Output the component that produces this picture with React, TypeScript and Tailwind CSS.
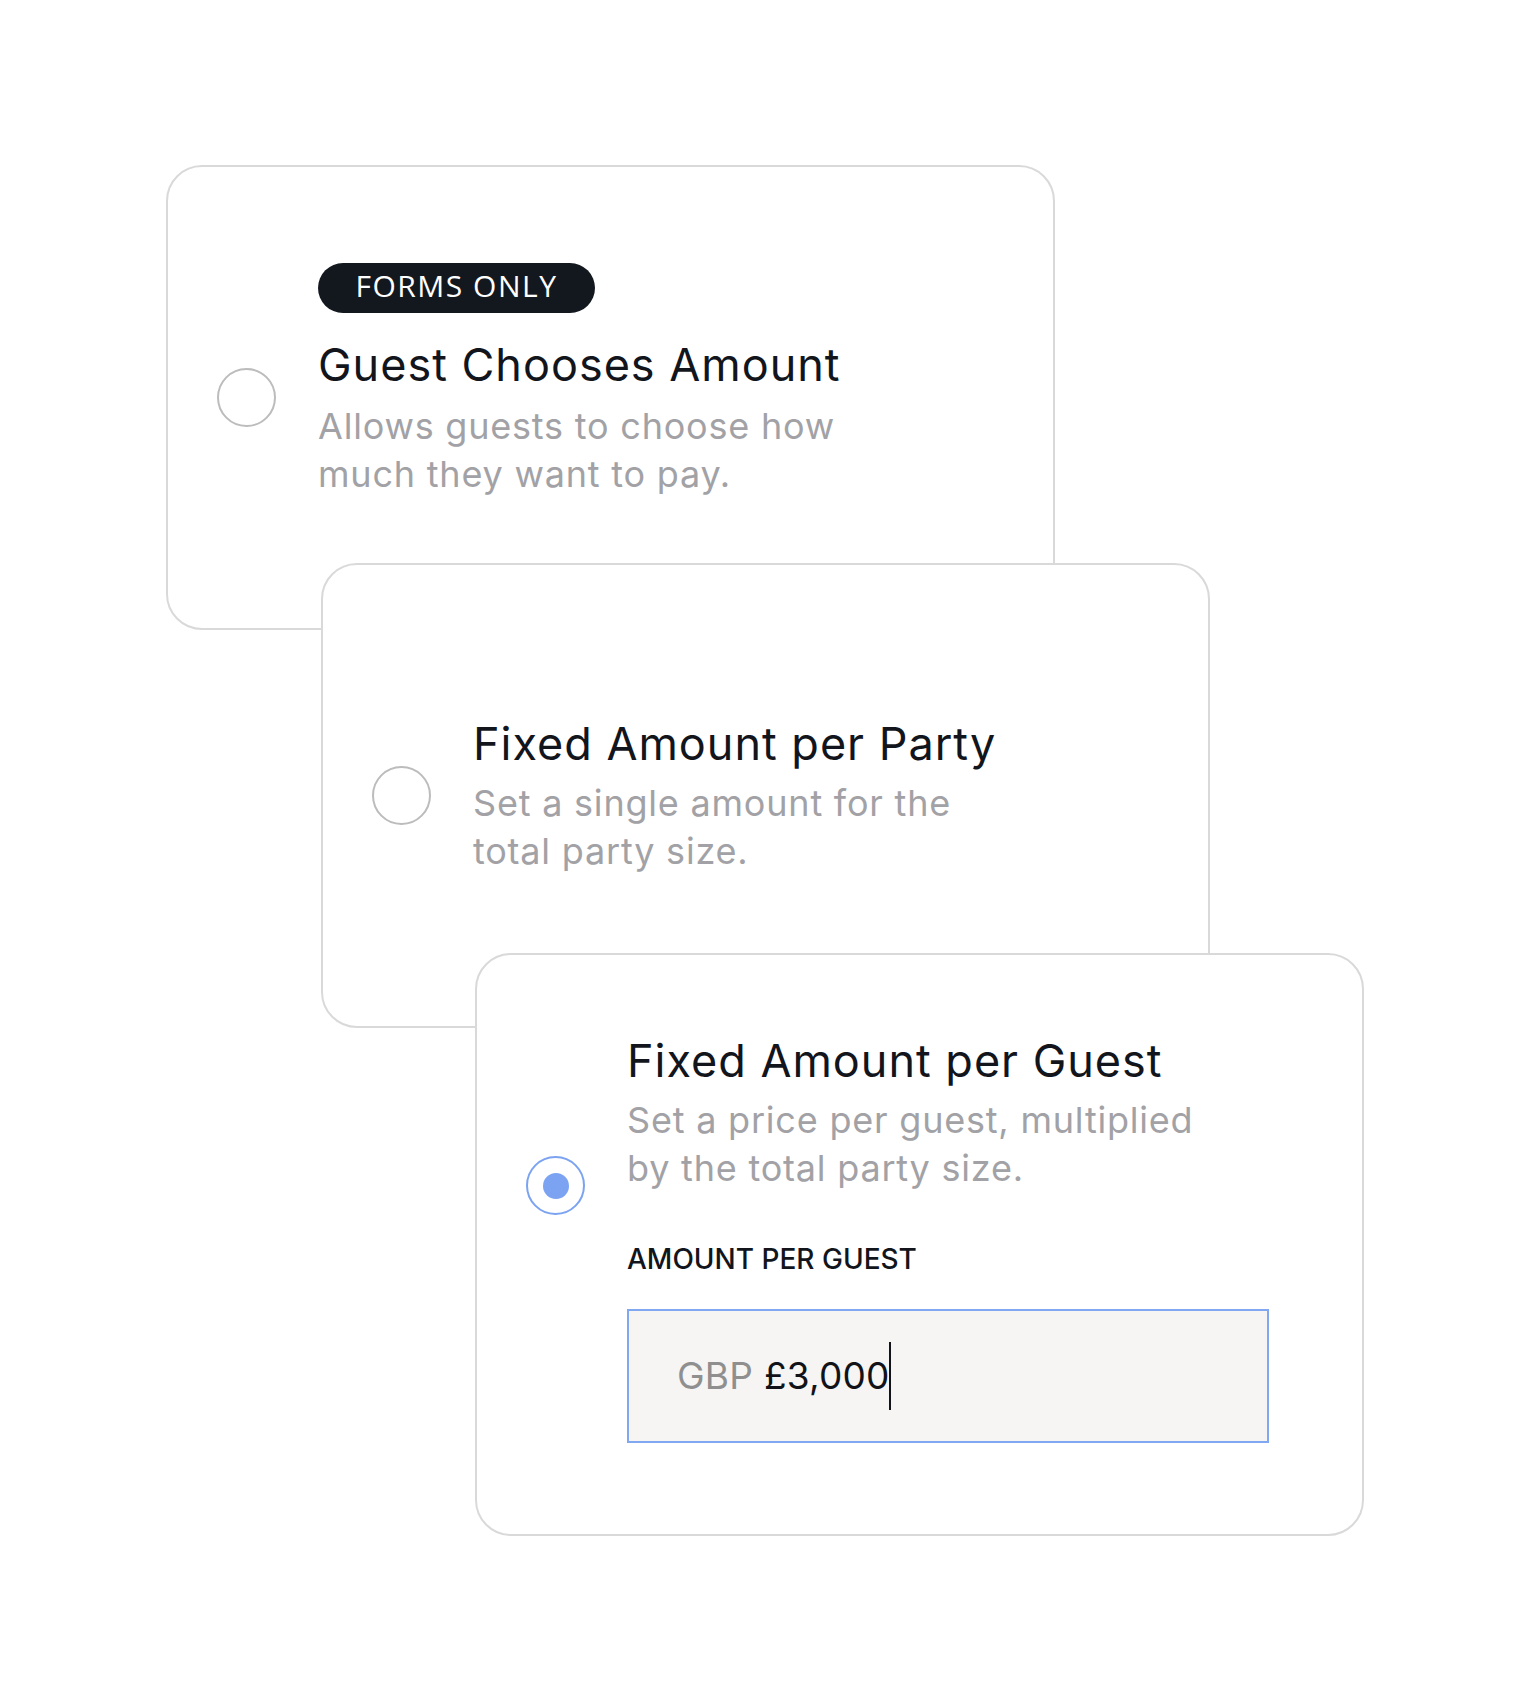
import React from 'react';

interface OptionCardProps {
  title: string;
  lines: string[];
  badge?: string;
  className?: string;
}

const Radio: React.FC<{ selected?: boolean; className?: string }> = ({ selected, className = '' }) => (
  <div
    className={`w-[59px] h-[59px] shrink-0 rounded-full border-[2.5px] flex items-center justify-center ${
      selected ? 'border-[#7ba3f1]' : 'border-[#bcbcbc]'
    } ${className}`}
  >
    {selected && <div className="w-[26px] h-[26px] rounded-full bg-[#7ba3f1]" />}
  </div>
);

const OptionText: React.FC<{ title: string; lines: string[]; tight?: boolean }> = ({ title, lines, tight }) => (
  <>
    <h3 className="text-[45px] leading-[56px] tracking-[0.022em] text-[#12151b] font-normal">{title}</h3>
    <p className={`${tight ? 'mt-[7px]' : 'mt-[9px]'} text-[36px] leading-[48px] tracking-[0.022em] text-[#a2a2a6]`}>
      {lines.map((line, i) => (
        <React.Fragment key={i}>
          {line}
          {i < lines.length - 1 && <br />}
        </React.Fragment>
      ))}
    </p>
  </>
);

const OptionCard: React.FC<OptionCardProps> = ({ title, lines, badge, className = '' }) => (
  <div
    className={`relative w-[889px] h-[465px] bg-white border-2 border-[#d9d9d9] rounded-[36px] flex items-center pl-[49px] ${className}`}
  >
    <Radio />
    <div className={`ml-[42px] ${badge ? 'pb-[35px]' : ''}`}>
      {badge && (
        <span className="inline-flex w-[277px] h-[50px] pb-[3px] items-center justify-center rounded-full bg-[#13181f] text-white text-[30px] leading-none tracking-[0.05em] font-['Open_Sans',sans-serif] mb-[24px]">
          {badge}
        </span>
      )}
      <OptionText title={title} lines={lines} tight={!badge} />
    </div>
  </div>
);

export default function App() {
  return (
    <div className="min-h-[1700px] bg-white pt-[165px] font-['Inter',sans-serif]">
      <div className="flex flex-col items-start">
        <OptionCard
          className="ml-[166px]"
          badge="FORMS ONLY"
          title="Guest Chooses Amount"
          lines={['Allows guests to choose how', 'much they want to pay.']}
        />
        <OptionCard
          className="ml-[321px] -mt-[67px]"
          title="Fixed Amount per Party"
          lines={['Set a single amount for the', 'total party size.']}
        />

        {/* selected option, with the amount field open */}
        <div className="relative ml-[475px] -mt-[75px] w-[889px] h-[583px] bg-white border-2 border-[#d9d9d9] rounded-[36px] flex items-start pl-[49px] pt-[78px]">
          <Radio selected className="mt-[123px]" />
          <div className="ml-[42px] w-[642px]">
            <OptionText
              tight
              title="Fixed Amount per Guest"
              lines={['Set a price per guest, multiplied', 'by the total party size.']}
            />
            <label className="block mt-[50px] text-[28px] leading-[34px] font-medium text-[#12151b]">
              AMOUNT PER GUEST
            </label>
            <div className="mt-[33px] h-[134px] border-2 border-[#80a7ef] bg-[#f6f5f3] flex items-center pl-[48px] text-[37px] tracking-[0.005em]">
              <span className="text-[#8f8f8f]">GBP</span>
              <span className="ml-[11px] text-[#111318]">£3,000</span>
              <span className="-ml-[1px] w-[2px] h-[68px] bg-[#111318]" />
            </div>
          </div>
        </div>
      </div>
    </div>
  );
}
